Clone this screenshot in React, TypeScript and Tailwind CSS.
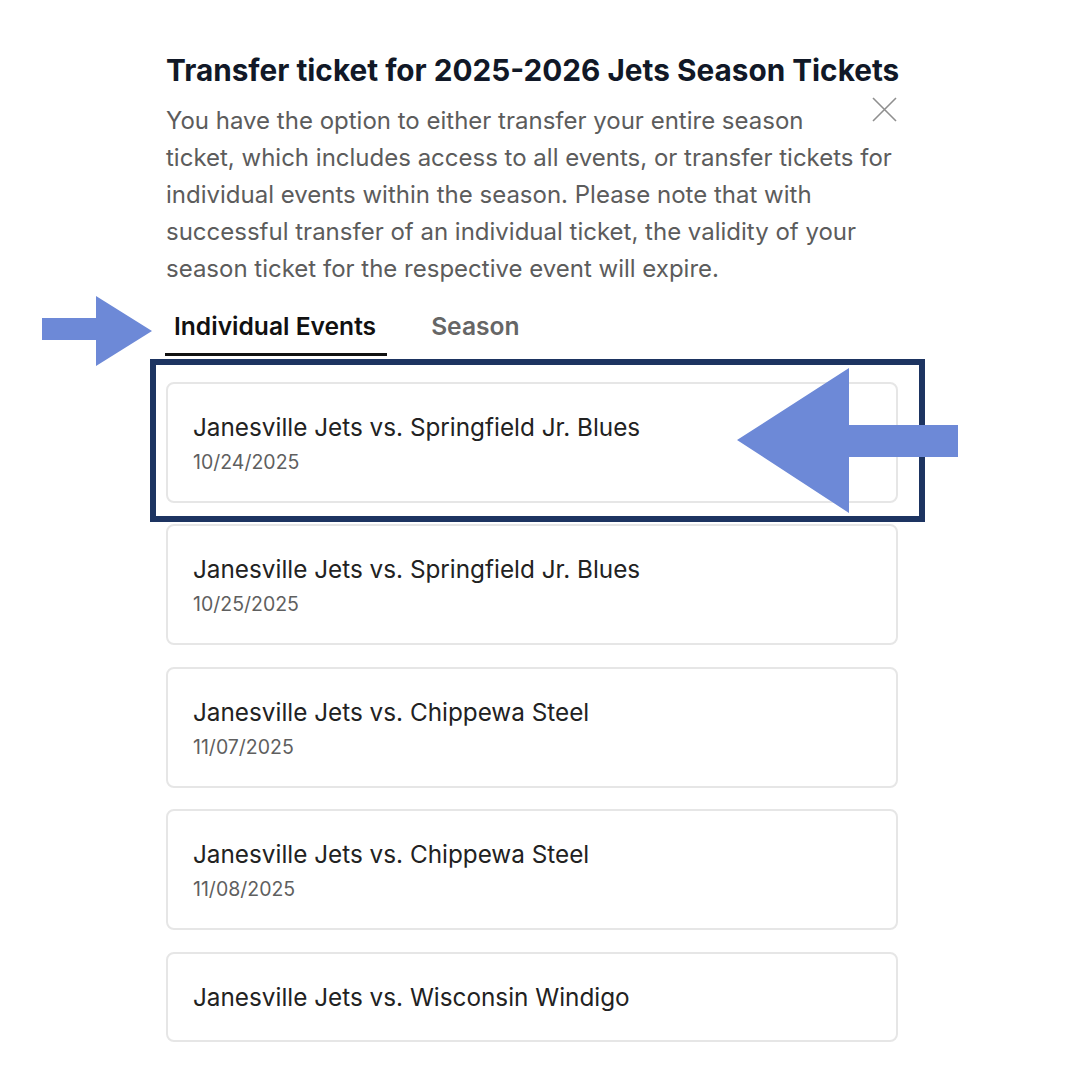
import React from "react";

const events = [
  { title: "Janesville Jets vs. Springfield Jr. Blues", date: "10/24/2025" },
  { title: "Janesville Jets vs. Springfield Jr. Blues", date: "10/25/2025" },
  { title: "Janesville Jets vs. Chippewa Steel", date: "11/07/2025" },
  { title: "Janesville Jets vs. Chippewa Steel", date: "11/08/2025" },
  { title: "Janesville Jets vs. Wisconsin Windigo", date: "" },
];

export default function App() {
  return (
    <div
      className="relative w-[1080px] h-[1080px] overflow-hidden bg-white"
      style={{ fontFamily: "Inter, 'Noto Sans', sans-serif" }}
    >
      {/* right-pointing annotation arrow */}
      <svg className="absolute left-[42px] top-[296px]" width="110" height="70" viewBox="0 0 110 70">
        <polygon points="0,22 54,22 54,0 110,35 54,70 54,44 0,44" fill="#6d89d7" />
      </svg>

      <div className="ml-[166px] w-[732px] pt-[52px]">
        <h1 className="text-[29.75px] leading-[36px] font-bold text-[#111827] whitespace-nowrap">
          Transfer ticket for 2025-2026 Jets Season Tickets
        </h1>
        <div className="mt-[13.5px] w-[745px]">
          <button className="float-right mt-[-5px] ml-[20px] mr-[14px] w-[25px] h-[25px]" aria-label="Close">
            <svg width="25" height="25" viewBox="0 0 25 25">
              <path d="M1 1 L24 24 M24 1 L1 24" stroke="#8f8f8f" strokeWidth="1.6" fill="none" />
            </svg>
          </button>
          <p className="text-[24px] leading-[37px] text-[#5c5c5c]">
            You have the option to either transfer your entire season ticket, which includes access to all events, or transfer tickets for individual events within the season. Please note that with successful transfer of an individual ticket, the validity of your season ticket for the respective event will expire.
          </p>
        </div>

        <div className="mt-[24px] flex items-end gap-[35px]">
          <div className="ml-[-1px] pl-[9px] pr-[11px] pb-[12px] border-b-[3px] border-[#111111] text-[24.6px] leading-[30px] font-semibold text-[#111111]">
            Individual Events
          </div>
          <div className="px-[9px] pb-[15px] text-[24.6px] leading-[30px] font-semibold text-[#666666]">
            Season
          </div>
        </div>

        <div className="relative mt-[26px] flex flex-col gap-[21.5px]">
          {events.map((e, i) => (
            <div
              key={i}
              className={`rounded-[8px] border-2 border-[#e6e6e6] bg-white px-[25px] pt-[28px] ${e.date ? "pb-[27px]" : "pb-[28px]"}`}
            >
              <div className="text-[24.3px] leading-[30px] text-[#222222]">{e.title}</div>
              {e.date && (
                <div className="mt-[8px] text-[19.5px] leading-[24px] text-[#5f5f5f]">{e.date}</div>
              )}
            </div>
          ))}
          {/* highlight box overlay */}
          <div className="pointer-events-none absolute left-[-16px] top-[-23px] w-[775px] h-[163px] border-[6px] border-[#1d3461]" />
        </div>
      </div>

      {/* left-pointing annotation arrow */}
      <svg className="absolute left-[737px] top-[368px]" width="221" height="145" viewBox="0 0 221 145">
        <polygon points="0,72 112,0 112,57 221,57 221,89 112,89 112,145" fill="#6d89d7" />
      </svg>
    </div>
  );
}
